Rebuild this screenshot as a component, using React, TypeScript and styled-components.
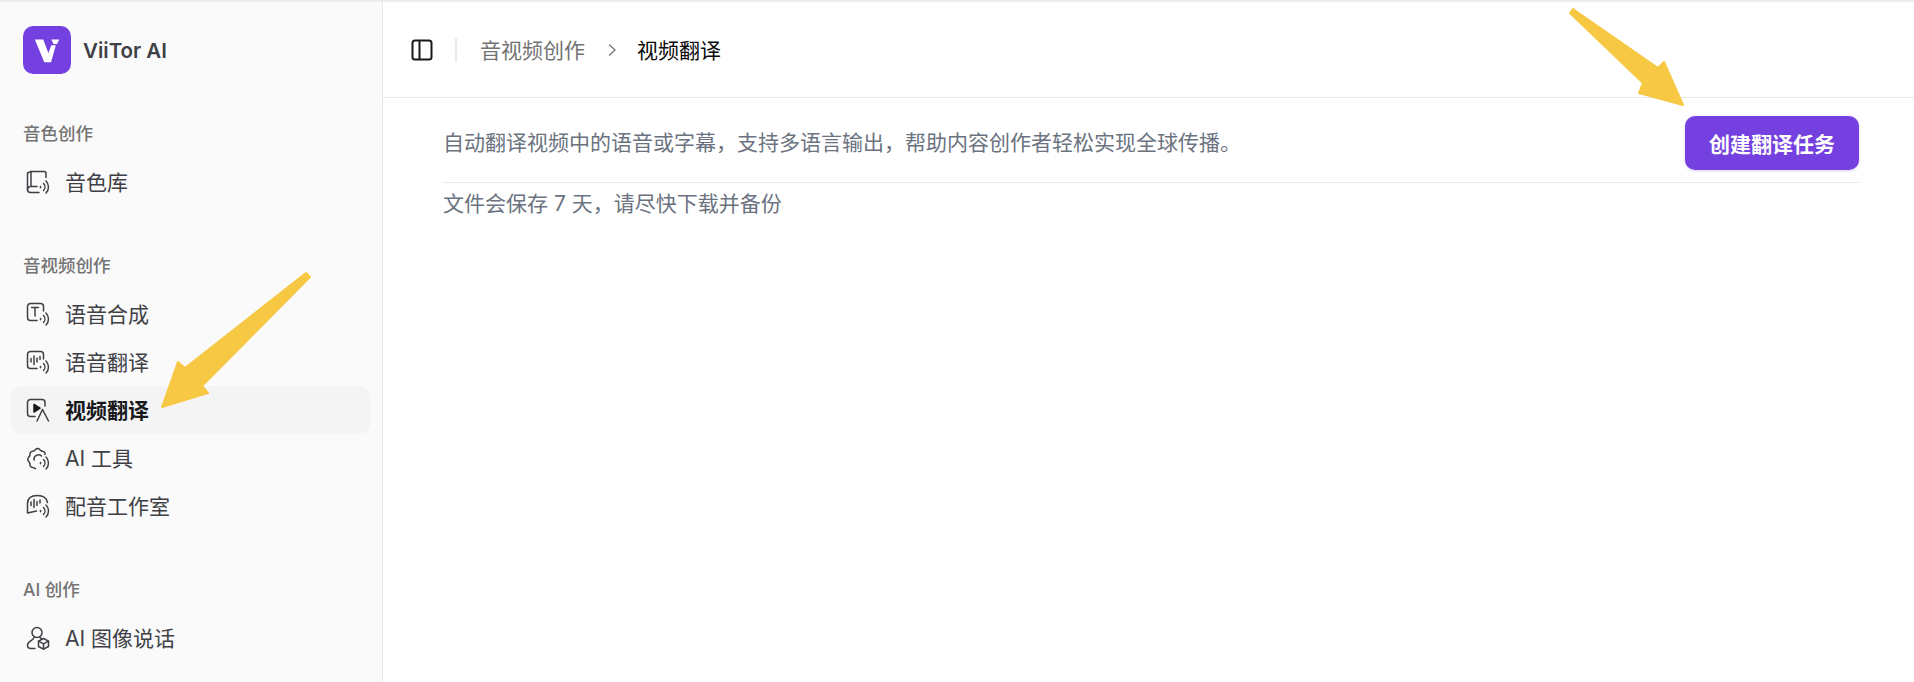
import React from "react";
import styled, { createGlobalStyle } from "styled-components";

const GlobalStyle = createGlobalStyle`
  html, body {
    margin: 0;
    height: 100%;
    overflow: hidden;
    background: #ffffff;
  }
  body {
    font-family: Inter, "Noto Sans CJK SC", sans-serif;
  }
`;

const Page = styled.div`
  position: relative;
  display: flex;
  width: 1914px;
  height: 682px;
  box-sizing: border-box;
  border-top: 2px solid #ececec;
  overflow: hidden;
`;

const Sidebar = styled.aside`
  flex: 0 0 359px;
  padding: 24px 12px 0 11px;
  background: #fafafa;
  border-right: 1px solid #e8e8e8;
`;

const Brand = styled.div`
  display: flex;
  align-items: center;
  gap: 12px;
  margin-left: 12px;
`;

const BrandName = styled.span`
  font-size: 20.5px;
  font-weight: 600;
  color: #3f3f46;
`;

const Section = styled.section`
  margin-top: 47px;
`;

const SectionLabel = styled.div`
  height: 24px;
  line-height: 26px;
  margin-bottom: 13px;
  padding-left: 12px;
  font-size: 17.5px;
  font-weight: 500;
  color: #737373;
`;

const NavItem = styled.div<{ $active?: boolean }>`
  display: flex;
  align-items: center;
  gap: 15px;
  height: 48px;
  padding-left: 15px;
  border-radius: 10px;
  font-size: 21px;
  font-weight: ${(p) => (p.$active ? 600 : 400)};
  color: ${(p) => (p.$active ? "#18181b" : "#3f3f46")};
  background: ${(p) => (p.$active ? "#f4f4f5" : "transparent")};
`;

const NavText = styled.span`
  margin-bottom: 2px;
`;

const Main = styled.main`
  flex: 1;
  min-width: 0;
`;

const Header = styled.header`
  display: flex;
  align-items: center;
  height: 95px;
  padding-left: 27px;
  border-bottom: 1px solid #e8e8e8;
`;

const Divider = styled.span`
  width: 2px;
  height: 24px;
  margin: 0 23px 0 21px;
  background: #e8e8e8;
`;

const Crumb = styled.span<{ $current?: boolean }>`
  margin-bottom: 2px;
  font-size: 21px;
  color: ${(p) => (p.$current ? "#0a0a0a" : "#737373")};
`;

const CrumbArrow = styled.span`
  display: flex;
  margin: 0 20px 0 22px;
`;

const Content = styled.div`
  padding: 18px 55px 0 60px;
`;

const DescRow = styled.div`
  display: flex;
  align-items: center;
  justify-content: space-between;
  padding-bottom: 12px;
  border-bottom: 1px solid #e8e8e8;
`;

const Desc = styled.p`
  margin: 0;
  font-size: 21px;
  line-height: 30px;
  color: #6b7280;
`;

const Note = styled(Desc)`
  margin-top: 6px;
`;

const CreateButton = styled.button`
  width: 174px;
  height: 54px;
  border: 0;
  border-radius: 10px;
  background: #7440e0;
  box-shadow: 0 1px 3px rgba(116, 64, 224, 0.25);
  font-family: inherit;
  font-size: 21px;
  font-weight: 700;
  color: #ffffff;
`;

const Annotations = styled.svg`
  position: absolute;
  top: -2px;
  left: 0;
  pointer-events: none;
`;

const NavIcon = styled.svg`
  flex: none;
  width: 24px;
  height: 24px;
  fill: none;
  stroke: #3f3f46;
  stroke-width: 1.5;
  stroke-linecap: round;
  stroke-linejoin: round;
`;

function Waves() {
  return (
    <>
      <path d="M14.5 16.5v1.2" />
      <path d="M17.5 13.5a5 5 0 0 1 0 7" />
      <path d="M20 11a8.5 8.5 0 0 1 0 12" />
    </>
  );
}

const icons: Record<string, React.ReactNode> = {
  library: (
    <>
      <path d="M20 7.5V3.5a2 2 0 0 0-2-2H5L1.5 3v16.5a3 3 0 0 0 3 3H13" />
      <path d="M5 1.5V16.5M1.5 19.5a3 3 0 0 1 3-3H11" />
      <Waves />
    </>
  ),
  tts: (
    <>
      <path d="M17.5 9V4.5a3 3 0 0 0-3-3h-10a3 3 0 0 0-3 3v11a3 3 0 0 0 3 3H11" />
      <path d="M5.5 5.5h7M9 5.5v8.5" />
      <Waves />
    </>
  ),
  voice: (
    <>
      <path d="M17.5 9V4.5a3 3 0 0 0-3-3h-10a3 3 0 0 0-3 3v11a3 3 0 0 0 3 3H11" />
      <path d="M5 8.5v3.5M8 6v8.5M11 8v4M14 6.5v3" />
      <Waves />
    </>
  ),
  video: (
    <>
      <path d="M19 8V4.5a3 3 0 0 0-3-3H4.5a3 3 0 0 0-3 3v11a3 3 0 0 0 3 3H9" />
      <path d="M8 6.5v7.5l6-3.8z" fill="#18181b" stroke="#18181b" />
      <path d="M11 23l5.5-11.5L22.5 23" />
    </>
  ),
  tools: (
    <>
      <path d="M19 8.5c.2-1.8-.6-3-2.5-3.2-1.2-.1-2-.9-2.8-1.800-1.100-1.300-3-1.300-4.200 0-.8.9-1.600 1.700-2.800 1.800C4.800 5.500 3.800 6.700 4 8.500c.1 1.100-.4 1.900-1.300 2.800-1.200 1.200-1.200 3 0 4.200.9.9 1.400 1.700 1.300 2.800-.2 1.800.8 3 2.700 3.200 1.200.1 2 .5 2.800 1.300" />
      <path d="M8 14a4.5 4.5 0 0 1 7.500-4" />
      <Waves />
    </>
  ),
  studio: (
    <>
      <path d="M21.5 8.500C20.500 3.500 16.500 1.500 11.500 1.500c-6 0-10 2.700-10 8v9.500l9-2" />
      <path d="M5 8v3.500M8 5.500v8M11 7.500v4M14 6v3" />
      <Waves />
    </>
  ),
  avatar: (
    <>
      <circle cx="11" cy="6.5" r="5" />
      <path d="M8 11.500c0 3-6.500 3.500-6.500 7.500 0 2.200 1.500 3.500 3.500 3.500h4" />
      <path d="M14 11.500c.4.5 1 .8 1.500 1" />
      <path d="M17.500 12.500l5 2.700v5.300l-5 2.700-5-2.700v-5.300z" />
      <path d="M12.500 15.200l5 2.700 5-2.700M17.500 17.900v5.300" />
    </>
  ),
};

const groups = [
  { label: "音色创作", items: [{ icon: "library", text: "音色库" }] },
  {
    label: "音视频创作",
    items: [
      { icon: "tts", text: "语音合成" },
      { icon: "voice", text: "语音翻译" },
      { icon: "video", text: "视频翻译", active: true },
      { icon: "tools", text: "AI 工具" },
      { icon: "studio", text: "配音工作室" },
    ],
  },
  { label: "AI 创作", items: [{ icon: "avatar", text: "AI 图像说话" }] },
];

export default function App() {
  return (
    <>
      <GlobalStyle />
      <Page>
        <Sidebar>
          <Brand>
            <svg width="48" height="48" viewBox="0 0 142 142">
              <rect width="142" height="142" rx="30" fill="#7440e0" />
              <path d="M35 40h25l15 40 9-23h13L83 107H63z" fill="#fff" />
              <path d="M84 40h23l-6 13H90z" fill="#fff" />
            </svg>
            <BrandName>ViiTor AI</BrandName>
          </Brand>
          {groups.map((group) => (
            <Section key={group.label}>
              <SectionLabel>{group.label}</SectionLabel>
              {group.items.map((item: { icon: string; text: string; active?: boolean }) => (
                <NavItem key={item.text} $active={item.active}>
                  <NavIcon viewBox="0 0 24 24">{icons[item.icon]}</NavIcon>
                  <NavText>{item.text}</NavText>
                </NavItem>
              ))}
            </Section>
          ))}
        </Sidebar>
        <Main>
          <Header>
            <svg width="24" height="24" viewBox="0 0 24 24" fill="none" stroke="#18181b" strokeWidth="2">
              <rect x="2.5" y="2.5" width="19" height="19" rx="2.5" />
              <path d="M9.500 2.500v19" />
            </svg>
            <Divider />
            <Crumb>音视频创作</Crumb>
            <CrumbArrow>
              <svg width="10" height="14" viewBox="0 0 10 14" fill="none" stroke="#737373" strokeWidth="1.3">
                <path d="M2 1.500L8 7l-6 5.500" />
              </svg>
            </CrumbArrow>
            <Crumb $current>视频翻译</Crumb>
          </Header>
          <Content>
            <DescRow>
              <Desc>自动翻译视频中的语音或字幕，支持多语言输出，帮助内容创作者轻松实现全球传播。</Desc>
              <CreateButton>创建翻译任务</CreateButton>
            </DescRow>
            <Note>文件会保存 7 天，请尽快下载并备份</Note>
          </Content>
        </Main>
        <Annotations width="1914" height="682" viewBox="0 0 1914 682">
          <path
            d="M306 273L310 277L202 386L208 393L162 407L178 362L185 368Z"
            fill="#f6c844"
            stroke="#f6c844"
            strokeWidth="2"
            strokeLinejoin="round"
          />
          <path
            d="M1573 9L1658 68L1664 62L1683 105L1639 93L1643 83L1570 13Z"
            fill="#f6c844"
            stroke="#f6c844"
            strokeWidth="2"
            strokeLinejoin="round"
          />
        </Annotations>
      </Page>
    </>
  );
}
